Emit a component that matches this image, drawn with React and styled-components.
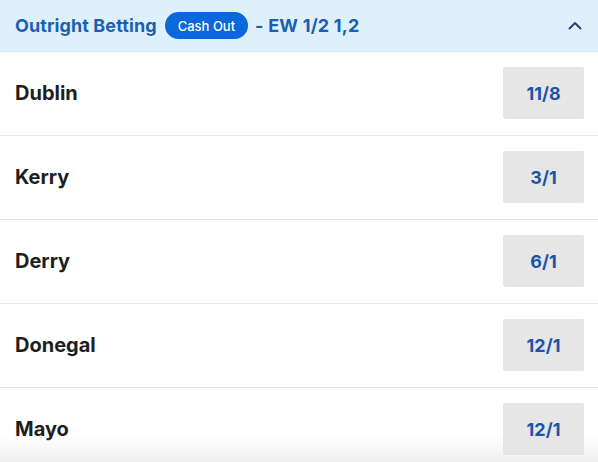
import React from "react";
import styled, { createGlobalStyle } from "styled-components";

const GlobalStyle = createGlobalStyle`
  html, body {
    margin: 0;
    padding: 0;
    background: #ffffff;
  }
  body {
    font-family: Inter, "Noto Sans", sans-serif;
  }
`;

const runners = [
  { name: "Dublin", odds: "11/8" },
  { name: "Kerry", odds: "3/1" },
  { name: "Derry", odds: "6/1" },
  { name: "Donegal", odds: "12/1" },
  { name: "Mayo", odds: "12/1" },
];

export default function App() {
  return (
    <Market>
      <GlobalStyle />
      <Header>
        <Title>Outright Betting</Title>
        <CashOut>Cash Out</CashOut>
        <Terms>- EW 1/2 1,2</Terms>
        <Toggle>
          <svg width="18" height="18" viewBox="0 0 18 18" fill="none">
            <path
              d="M3.5 11.5L9 6l5.5 5.5"
              stroke="#1d3f73"
              strokeWidth="1.8"
              strokeLinecap="round"
              strokeLinejoin="round"
            />
          </svg>
        </Toggle>
      </Header>
      <List>
        {runners.map((r) => (
          <Row key={r.name}>
            <Name>{r.name}</Name>
            <OddsButton>{r.odds}</OddsButton>
          </Row>
        ))}
      </List>
      <Fade />
    </Market>
  );
}

const Market = styled.div`
  position: relative;
  width: 598px;
  height: 462px;
  overflow: hidden;
  display: flex;
  flex-direction: column;
  background: #ffffff;
`;

const Header = styled.div`
  flex-shrink: 0;
  height: 52px;
  display: flex;
  align-items: center;
  padding: 0 14px 0 15px;
  box-sizing: border-box;
  background-color: #dff0fd;
  border-bottom: 1px solid #d6e6f3;
`;

const Title = styled.div`
  color: #1b5fb4;
  font-size: 18px;
  font-weight: 700;
  letter-spacing: 0.1px;
`;

const CashOut = styled.div`
  margin-left: 8px;
  height: 27px;
  padding: 0 13px;
  display: flex;
  align-items: center;
  border-radius: 14px;
  background-color: #0a67dc;
  color: #ffffff;
  font-size: 13px;
  font-weight: 500;
`;

const Terms = styled.div`
  margin-left: 7px;
  color: #1b5fb4;
  font-size: 18px;
  font-weight: 700;
  letter-spacing: 0.2px;
`;

const Toggle = styled.div`
  margin-left: auto;
  display: flex;
  align-items: center;
`;

const List = styled.div`
  flex-shrink: 0;
  display: flex;
  flex-direction: column;
`;

const Row = styled.div`
  flex-shrink: 0;
  height: 84px;
  display: flex;
  align-items: center;
  justify-content: space-between;
  padding: 0 14px 0 15px;
  box-sizing: border-box;
  border-bottom: 1px solid #e6e6e6;
`;

const Name = styled.div`
  color: #1e1e1e;
  font-size: 20px;
  font-weight: 700;
  margin-top: -1px;
`;

const OddsButton = styled.button`
  width: 81px;
  height: 52px;
  border: none;
  border-radius: 2px;
  background-color: #e6e6e6;
  color: #1e54a6;
  font-family: Inter, "Noto Sans", sans-serif;
  font-size: 18px;
  font-weight: 700;
  cursor: pointer;
  margin-top: -1px;
`;

const Fade = styled.div`
  position: absolute;
  left: 0;
  right: 0;
  bottom: 0;
  height: 26px;
  pointer-events: none;
  background: linear-gradient(
    to bottom,
    rgba(230, 230, 230, 0) 0%,
    rgba(225, 225, 225, 0.55) 100%
  );
`;
